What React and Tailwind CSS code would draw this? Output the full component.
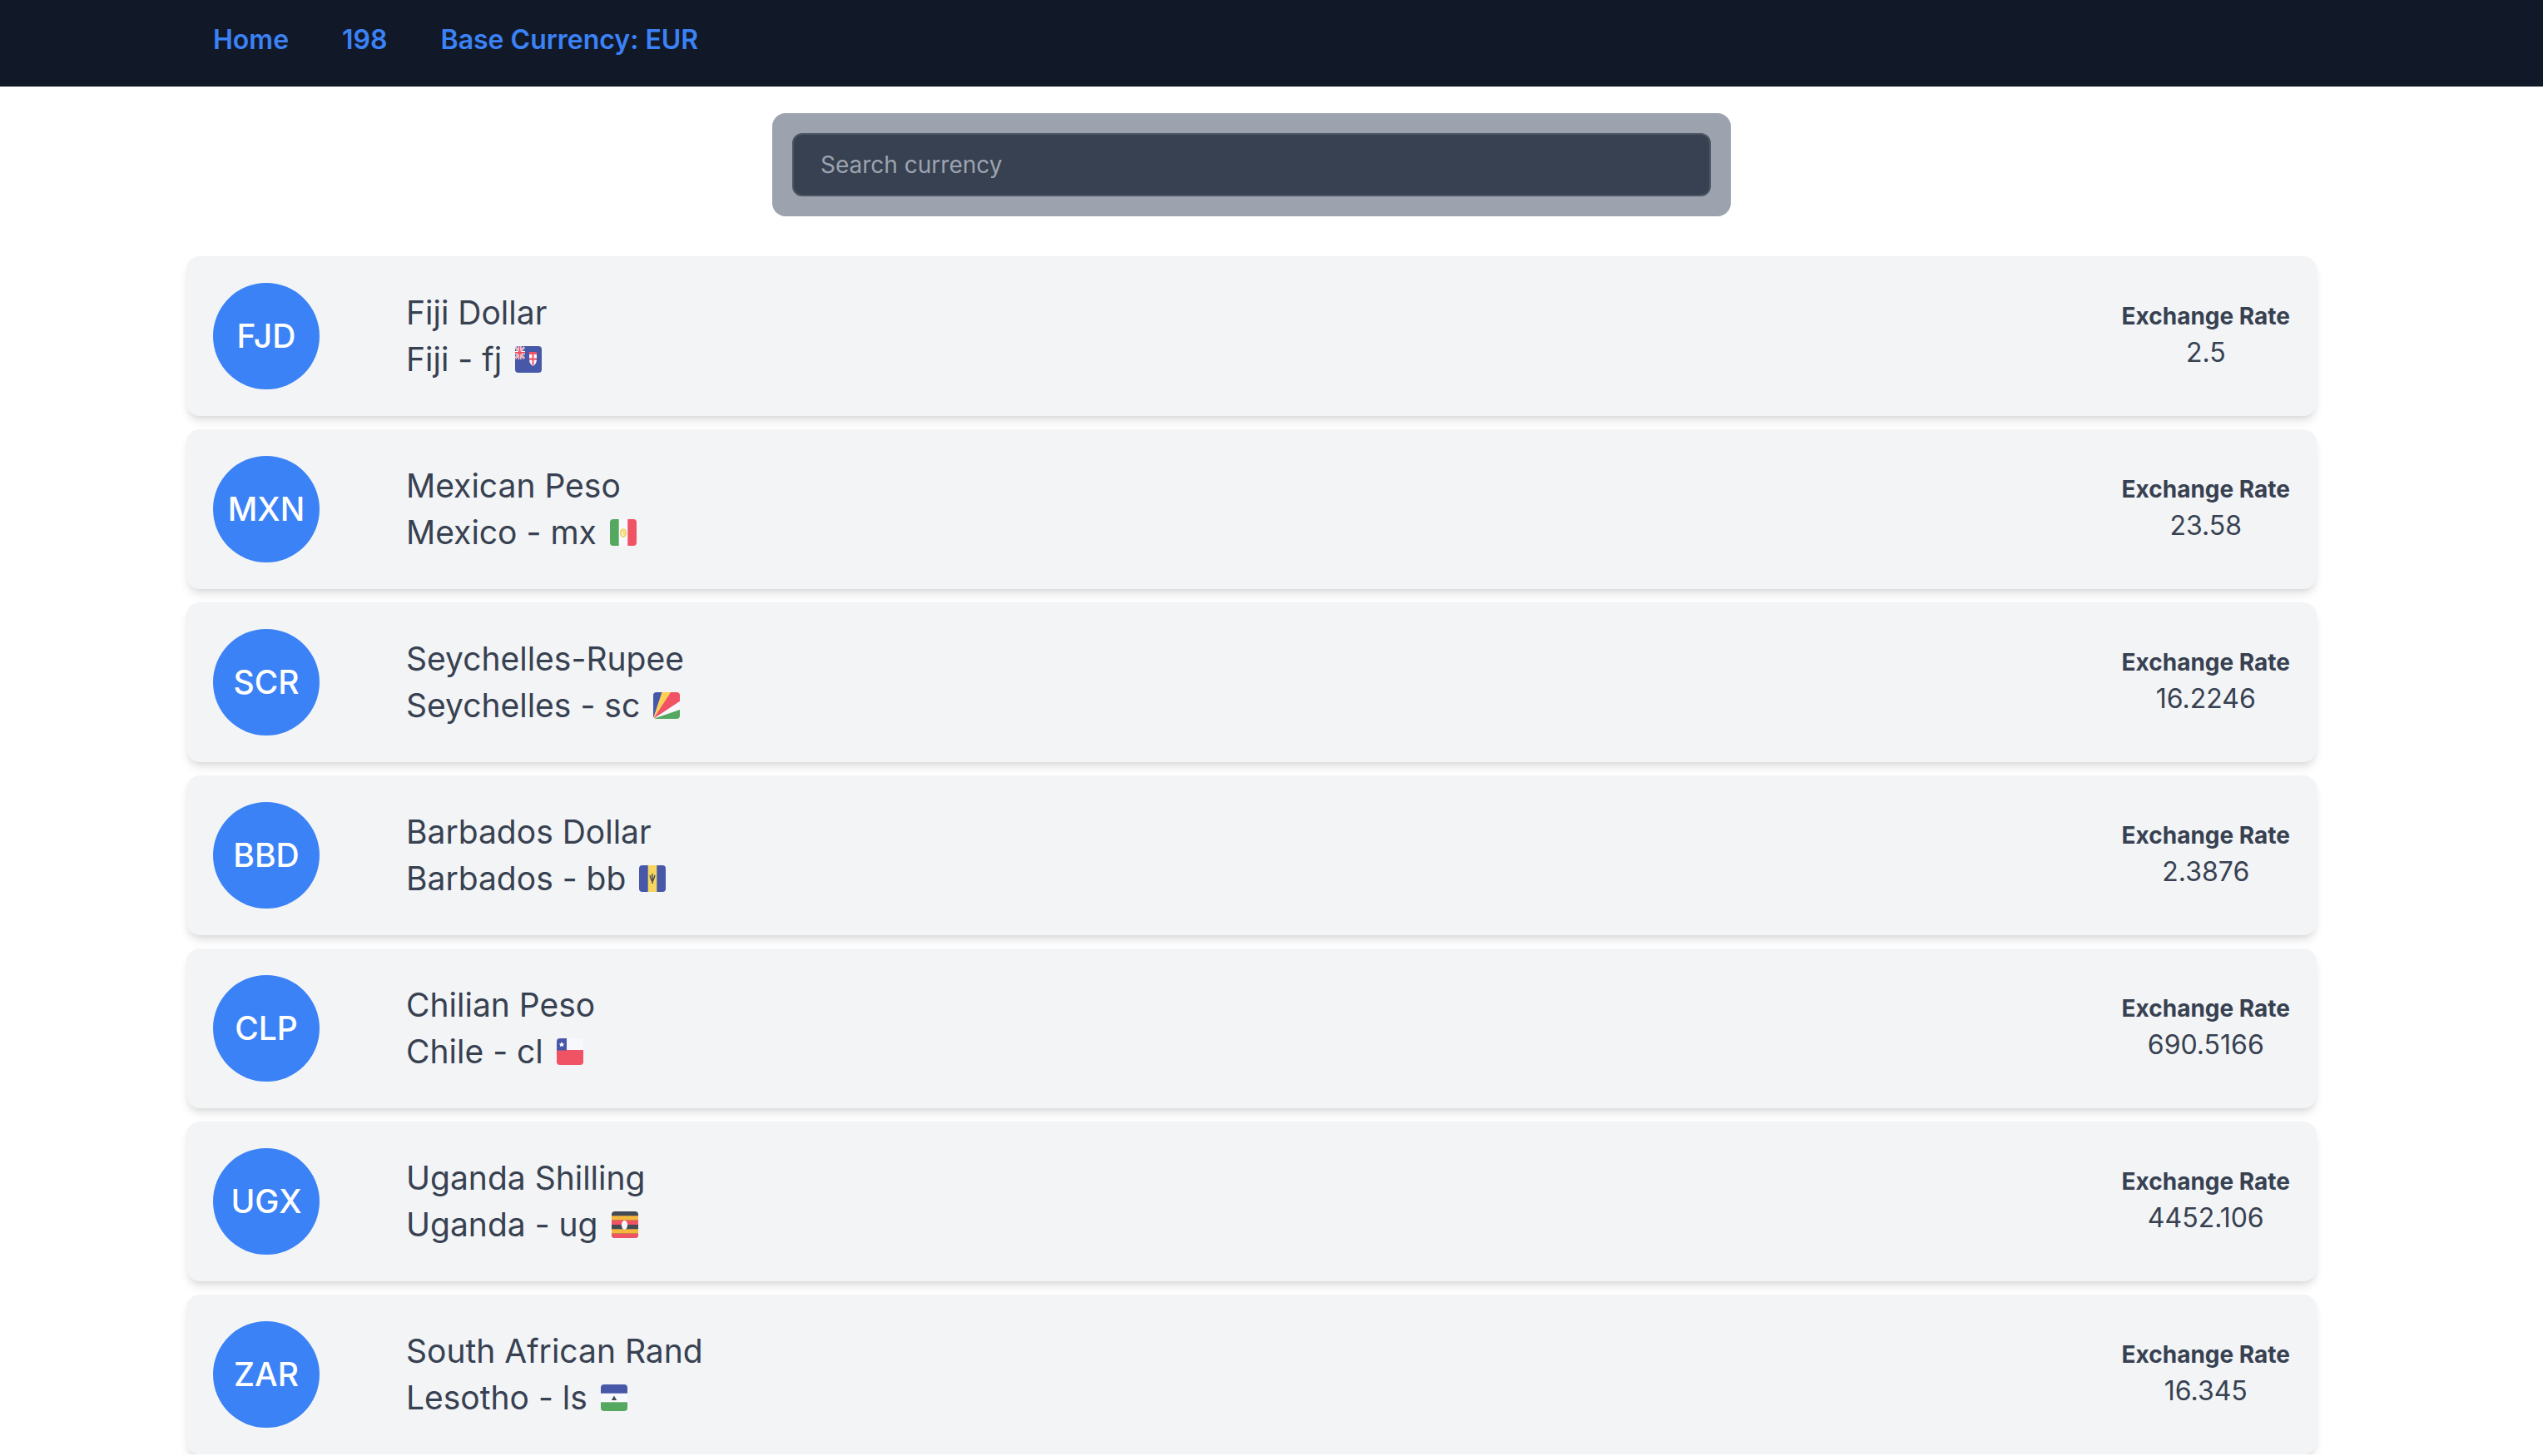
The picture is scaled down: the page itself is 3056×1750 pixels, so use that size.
import React, { useState } from "react";

const BLUE = "#4758a9";
const RED = "#f05364";
const GREEN = "#55a860";
const YELLOW = "#f5b83d";
const DARK = "#434b56";
const WHITE = "#f8f9fc";

const flags = {
  fj: (
    <>
      <rect width="32" height="32" fill={BLUE} />
      <path d="M0 1l11 14M11 1L0 15" stroke={WHITE} strokeWidth="2.6" />
      <path d="M5.5 0v16M0 8h12" stroke={WHITE} strokeWidth="4" />
      <path d="M0 1l11 14M11 1L0 15" stroke={RED} strokeWidth="1" />
      <path d="M5.5 0v16M0 8h12" stroke={RED} strokeWidth="1.8" />
      <path d="M17 8h9v8c0 4-2 6.500-4.500 8C19 22.500 17 20 17 16z" fill={WHITE} />
      <path d="M17 7h9v3h-9zM20.500 9h2v14h-2zM17 14.500h9v2.200h-9z" fill={RED} />
    </>
  ),
  mx: (
    <>
      <rect width="32" height="32" fill={WHITE} />
      <rect width="10.7" height="32" fill={GREEN} />
      <rect x="21.3" width="10.7" height="32" fill={RED} />
      <ellipse cx="16" cy="16.500" rx="3.200" ry="4.500" fill="#fbf0cc" stroke="#f2cd55" strokeWidth="1.600" />
      <path d="M14.500 15c1-1.500 2.500-1 2.500.5v3" fill="none" stroke="#f2cd55" strokeWidth="1.200" />
    </>
  ),
  sc: (
    <>
      <rect width="32" height="32" fill={WHITE} />
      <path d="M0 32V0h10.700z" fill={BLUE} />
      <path d="M0 32L10.700 0H21z" fill="#ffcf50" />
      <path d="M0 32L21 0h11v10.700z" fill={RED} />
      <path d="M0 32l32-11v11z" fill={GREEN} />
    </>
  ),
  bb: (
    <>
      <rect width="32" height="32" fill={BLUE} />
      <rect x="10.7" width="10.6" height="32" fill="#f6d560" />
      <path
        d="M16 10v12M13 12c1 2 .5 5.500 3 6.500 2.500-1 2-4.500 3-6.500M14.500 18.500h3"
        fill="none"
        stroke={DARK}
        strokeWidth="1.400"
      />
    </>
  ),
  cl: (
    <>
      <rect width="32" height="32" fill={WHITE} />
      <rect y="14" width="32" height="18" fill={RED} />
      <rect width="12" height="14.500" fill={BLUE} />
      <path d="M6 4l1 2.200 2.200.2-1.500 1.600.5 2.300L6 9.100l-2.200 1.200.5-2.300-1.500-1.600L5 6.200z" fill="#fff" />
    </>
  ),
  ug: (
    <>
      <rect width="32" height="32" fill={DARK} />
      <rect y="5.300" width="32" height="5.400" fill={YELLOW} />
      <rect y="10.700" width="32" height="5.300" fill={RED} />
      <rect y="21.300" width="32" height="5.400" fill={YELLOW} />
      <rect y="26.700" width="32" height="5.300" fill={RED} />
      <ellipse cx="15.500" cy="16.300" rx="3.600" ry="5.500" fill={WHITE} />
    </>
  ),
  ls: (
    <>
      <rect width="32" height="32" fill={WHITE} />
      <rect width="32" height="10.700" fill={BLUE} />
      <rect y="21.300" width="32" height="10.700" fill={GREEN} />
      <path d="M16 13.500l3.200 5.500h-6.400z" fill={DARK} />
    </>
  ),
};

const currencies = [
  { code: "FJD", name: "Fiji Dollar", country: "Fiji", iso: "fj", rate: "2.5" },
  { code: "MXN", name: "Mexican Peso", country: "Mexico", iso: "mx", rate: "23.58" },
  { code: "SCR", name: "Seychelles-Rupee", country: "Seychelles", iso: "sc", rate: "16.2246" },
  { code: "BBD", name: "Barbados Dollar", country: "Barbados", iso: "bb", rate: "2.3876" },
  { code: "CLP", name: "Chilian Peso", country: "Chile", iso: "cl", rate: "690.5166" },
  { code: "UGX", name: "Uganda Shilling", country: "Uganda", iso: "ug", rate: "4452.106" },
  { code: "ZAR", name: "South African Rand", country: "Lesotho", iso: "ls", rate: "16.345" },
];

function Flag({ iso }) {
  return (
    <svg viewBox="0 0 32 32" className="size-8 rounded-sm" role="img" aria-label={`Flag ${iso}`}>
      {flags[iso]}
    </svg>
  );
}

function CurrencyCard({ code, name, country, iso, rate }) {
  return (
    <li className="flex items-center rounded-2xl bg-[#f3f4f6] p-8 text-[#374151] shadow-[0_8px_12px_-2px_rgb(0_0_0/0.1),0_4px_8px_-4px_rgb(0_0_0/0.1)]">
      <div className="flex size-32 shrink-0 items-center justify-center rounded-full bg-[#3b82f6] text-[39px] font-medium text-white">
        {code}
      </div>
      <div className="ml-26 flex-1 text-[39px] leading-14">
        <h2>{name}</h2>
        <p className="flex items-center gap-4">
          {country} - {iso}
          <Flag iso={iso} />
        </p>
      </div>
      <div className="text-center">
        <h3 className="text-[28px] leading-10 font-bold">Exchange Rate</h3>
        <p className="text-[32px] leading-12">{rate}</p>
      </div>
    </li>
  );
}

export default function App() {
  const [query, setQuery] = useState("");
  const needle = query.trim().toLowerCase();
  const shown = currencies.filter((c) =>
    `${c.code} ${c.name} ${c.country}`.toLowerCase().includes(needle)
  );

  return (
    <div className="bg-white font-['Inter','Liberation_Sans',sans-serif]">
      <header className="bg-[#111827] pr-12">
        <nav className="mx-auto flex max-w-[2560px] gap-16 px-8 pt-6 pb-8 text-[32px] leading-12 font-semibold text-[#3b82f6]">
          <a href="#home">Home</a>
          <a href="#count">198</a>
          <a href="#base">Base Currency: EUR</a>
        </nav>
      </header>
      <main className="pt-8 pr-12">
        <form
          className="mx-auto max-w-6xl rounded-2xl bg-[#9ca3af] p-6"
          onSubmit={(e) => e.preventDefault()}
        >
          <input
            type="text"
            aria-label="Search currency"
            placeholder="Search currency"
            value={query}
            onChange={(e) => setQuery(e.target.value)}
            className="block w-full rounded-xl border-2 border-[#4b5563] bg-[#374151] px-8 py-4 text-[28px] leading-10 text-white placeholder:text-[#9ca3af]"
          />
        </form>
        <ul className="mx-auto mt-12 flex max-w-[2560px] flex-col gap-4">
          {shown.map((c) => (
            <CurrencyCard key={c.code} {...c} />
          ))}
        </ul>
      </main>
    </div>
  );
}
